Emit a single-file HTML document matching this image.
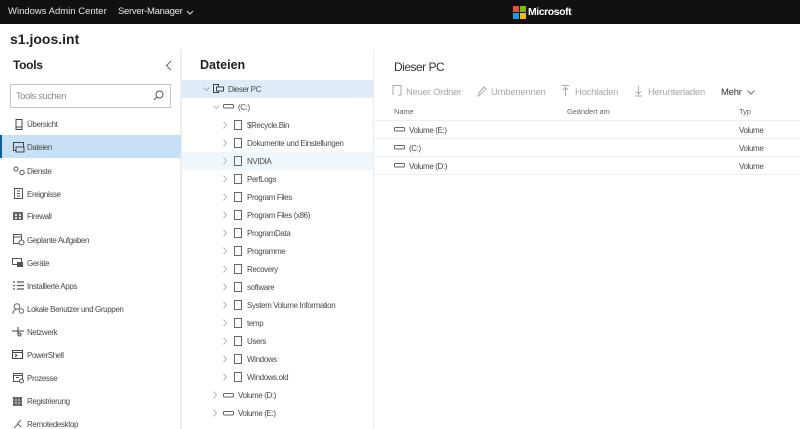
<!DOCTYPE html>
<html><head><meta charset="utf-8"><style>
html,body{margin:0;padding:0;background:#fff}
#p{position:relative;width:800px;height:429px;overflow:hidden;background:#fff;font-family:"Liberation Sans",sans-serif;color:#333;font-size:8px;filter:blur(.3px)}
.a{position:absolute;white-space:nowrap}
.t{position:absolute;white-space:nowrap;line-height:12px;height:12px;color:#4a4a4a;font-size:8px;letter-spacing:-.38px;transform:translateY(1px)}
.b{position:absolute;white-space:nowrap;top:86px;color:#a6a6a6;font-size:9.5px;line-height:13px;letter-spacing:-.25px}
svg{position:absolute;overflow:visible;fill:none}
</style></head><body><div id="p">
<div class="a" style="left:0;top:0;width:800px;height:24px;background:#111"></div>
<div class="a" style="left:8px;top:5px;color:#e6e6e6;font-size:9.5px;line-height:14px">Windows Admin Center</div>
<div class="a" style="left:118px;top:5px;color:#e6e6e6;font-size:9.5px;line-height:14px;letter-spacing:-.3px">Server-Manager</div>
<svg style="left:186px;top:10px" width="8" height="5"><path d="M1 1l3 3 3-3" stroke="#ddd"/></svg>
<svg style="left:513px;top:6px" width="13" height="13"><rect width="6" height="6" fill="#f25022"/><rect x="7" width="6" height="6" fill="#7fba00"/><rect y="7" width="6" height="6" fill="#00a4ef"/><rect x="7" y="7" width="6" height="6" fill="#ffb900"/></svg>
<div class="a" style="left:528px;top:5px;color:#fff;font-size:10.5px;font-weight:bold;line-height:15px;letter-spacing:-.45px">Microsoft</div>
<div class="a" style="left:10px;top:29px;color:#222;font-size:14px;font-weight:bold;line-height:20px">s1.joos.int</div>

<div class="a" style="left:180px;top:50px;width:2px;height:379px;background:#eee"></div>
<div class="a" style="left:373px;top:50px;width:1px;height:379px;background:#eee"></div>
<div class="a" style="left:13px;top:57px;color:#222;font-size:12px;font-weight:bold;line-height:17px;letter-spacing:-.3px">Tools</div>
<svg style="left:165px;top:60px" width="7" height="11"><path d="M6 1L1.500 5.500 6 10" stroke="#666"/></svg>
<div class="a" style="left:10px;top:84px;width:159px;height:22px;border:1px solid #c4c4c4;box-sizing:content-box"></div>
<div class="a" style="left:16px;top:90px;color:#8a8a8a;font-size:9.5px;line-height:14px;letter-spacing:-.45px">Tools suchen</div>
<svg style="left:153px;top:90px" width="11" height="11"><circle cx="6.500" cy="4.500" r="3.500" stroke="#555"/><path d="M4 7L1 10" stroke="#555"/></svg>

<div class="a" style="left:0;top:135px;width:181px;height:23px;background:#c7e0f4"></div>
<div class="a" style="left:0;top:135px;width:2px;height:23px;background:#0a5f9e"></div>

<svg style="left:14px;top:119px" width="10" height="11"><rect x="2" y=".5" width="6" height="10" stroke="#444"/><path d="M2 8h6" stroke="#444"/></svg>
<svg style="left:13px;top:142px" width="12" height="11"><rect x=".5" y=".5" width="10" height="8" stroke="#444"/><rect x="3" y="5" width="8" height="5" fill="#c7e0f4" stroke="#444"/></svg>
<svg style="left:13px;top:166px" width="12" height="10"><circle cx="3" cy="3" r="2" stroke="#555"/><circle cx="9" cy="6.500" r="2.200" stroke="#555"/></svg>
<svg style="left:14px;top:188px" width="10" height="12"><rect x=".5" y=".5" width="8" height="10" stroke="#555"/><path d="M3 3h3M3 5.500h3M3 8h3" stroke="#555"/></svg>
<svg style="left:13px;top:212px" width="11" height="9"><rect width="10" height="8" fill="#666"/><path d="M2 2h2v2H2zM6 2h2v2H6zM2 5h2v2H2zM6 5h2v2H6z" fill="#ddd"/></svg>
<svg style="left:13px;top:234px" width="12" height="12"><rect x=".5" y=".5" width="8" height="9" stroke="#555"/><path d="M.5 3h8" stroke="#555"/><circle cx="8.500" cy="8.500" r="2.500" fill="#fff" stroke="#555"/></svg>
<svg style="left:12px;top:258px" width="12" height="10"><rect x=".5" y=".5" width="9" height="6" stroke="#555"/><rect x="5" y="4" width="6" height="5" fill="#555"/></svg>
<svg style="left:13px;top:281px" width="11" height="10"><path d="M0 1h2M0 4.500h2M0 8h2M4 1h7M4 4.500h7M4 8h7" stroke="#555" stroke-width="1.200"/></svg>
<svg style="left:12px;top:303px" width="13" height="12"><circle cx="5" cy="3.500" r="2.800" stroke="#666"/><path d="M1 11c0-3 2-5 4-5" stroke="#666"/><circle cx="9.500" cy="8" r="2.200" stroke="#666"/></svg>
<svg style="left:12px;top:327px" width="13" height="10"><path d="M0 4h12M6 0v7" stroke="#444"/><circle cx="7.500" cy="7.500" r="1.500" fill="#fff" stroke="#444"/></svg>
<svg style="left:12px;top:350px" width="12" height="10"><rect x=".5" y=".5" width="10" height="8" stroke="#444"/><path d="M.5 2.500h10M3 4l2 1.500L3 7" stroke="#444"/></svg>
<svg style="left:13px;top:373px" width="12" height="11"><rect x=".5" y=".5" width="9" height="8" stroke="#555"/><path d="M.5 2.500h9M3 4.500h3" stroke="#555"/><circle cx="8.500" cy="8" r="2" fill="#fff" stroke="#555"/></svg>
<svg style="left:13px;top:396px" width="11" height="11"><rect y="1" width="9" height="9" fill="#555"/><path d="M3 1v9M6 1v9M0 4h9M0 7h9" stroke="#ddd" stroke-width=".6"/></svg>
<svg style="left:13px;top:419px" width="11" height="11"><path d="M1 9l4-4M8 1L4.500 4.500 8 8" stroke="#666"/></svg>

<div class="t" style="left:27px;top:118px">Übersicht</div>
<div class="t" style="left:27px;top:141px">Dateien</div>
<div class="t" style="left:27px;top:165px">Dienste</div>
<div class="t" style="left:27px;top:188px">Ereignisse</div>
<div class="t" style="left:27px;top:210px">Firewall</div>
<div class="t" style="left:27px;top:234px">Geplante Aufgaben</div>
<div class="t" style="left:27px;top:257px">Geräte</div>
<div class="t" style="left:27px;top:280px">Installierte Apps</div>
<div class="t" style="left:27px;top:303px">Lokale Benutzer und Gruppen</div>
<div class="t" style="left:27px;top:326px">Netzwerk</div>
<div class="t" style="left:27px;top:349px">PowerShell</div>
<div class="t" style="left:27px;top:372px">Prozesse</div>
<div class="t" style="left:27px;top:395px">Registrierung</div>
<div class="t" style="left:27px;top:418px">Remotedesktop</div>

<div class="a" style="left:200px;top:57px;color:#222;font-size:12.500px;font-weight:bold;line-height:17px">Dateien</div>
<div class="a" style="left:182px;top:80px;width:191px;height:18px;background:#deecf9"></div>
<div class="a" style="left:182px;top:152px;width:191px;height:18px;background:#eff6fc"></div>
<svg style="left:203px;top:87px" width="7" height="5"><path d="M.5.500L3.500 3.500 6.500.500" stroke="#aaa"/></svg>
<svg style="left:213px;top:84px" width="12" height="10"><rect x=".5" y=".5" width="5" height="8" stroke="#444"/><rect x="3.500" y="3" width="7" height="4" fill="#deecf9" stroke="#444"/></svg>
<div class="t" style="left:228px;top:83px">Dieser PC</div>
<svg style="left:213px;top:105px" width="7" height="5"><path d="M.5.500L3.500 3.500 6.500.500" stroke="#bbb"/></svg>
<svg style="left:223px;top:104px" width="11" height="5"><rect x=".5" y=".5" width="10" height="3.500" rx="1" stroke="#666"/></svg>
<div class="t" style="left:238px;top:101px">(C:)</div>

<svg style="left:223px;top:121px" width="5" height="8"><path d="M.5.500L3.500 4 .5 7.500" stroke="#bbb"/></svg><svg style="left:234px;top:120px" width="9" height="11"><path d="M.5.500h7v9h-7z" stroke="#666"/></svg><div class="t" style="left:247px;top:119px">$Recycle.Bin</div>
<svg style="left:223px;top:139px" width="5" height="8"><path d="M.5.500L3.500 4 .5 7.500" stroke="#bbb"/></svg><svg style="left:234px;top:138px" width="9" height="11"><path d="M.5.500h7v9h-7z" stroke="#666"/></svg><div class="t" style="left:247px;top:137px">Dokumente und Einstellungen</div>
<svg style="left:223px;top:157px" width="5" height="8"><path d="M.5.500L3.500 4 .5 7.500" stroke="#bbb"/></svg><svg style="left:234px;top:156px" width="9" height="11"><path d="M.5.500h7v9h-7z" stroke="#666"/></svg><div class="t" style="left:247px;top:155px">NVIDIA</div>
<svg style="left:223px;top:175px" width="5" height="8"><path d="M.5.500L3.500 4 .5 7.500" stroke="#bbb"/></svg><svg style="left:234px;top:174px" width="9" height="11"><path d="M.5.500h7v9h-7z" stroke="#666"/></svg><div class="t" style="left:247px;top:173px">PerfLogs</div>
<svg style="left:223px;top:193px" width="5" height="8"><path d="M.5.500L3.500 4 .5 7.500" stroke="#bbb"/></svg><svg style="left:234px;top:192px" width="9" height="11"><path d="M.5.500h7v9h-7z" stroke="#666"/></svg><div class="t" style="left:247px;top:191px">Program Files</div>
<svg style="left:223px;top:211px" width="5" height="8"><path d="M.5.500L3.500 4 .5 7.500" stroke="#bbb"/></svg><svg style="left:234px;top:210px" width="9" height="11"><path d="M.5.500h7v9h-7z" stroke="#666"/></svg><div class="t" style="left:247px;top:209px">Program Files (x86)</div>
<svg style="left:223px;top:229px" width="5" height="8"><path d="M.5.500L3.500 4 .5 7.500" stroke="#bbb"/></svg><svg style="left:234px;top:228px" width="9" height="11"><path d="M.5.500h7v9h-7z" stroke="#666"/></svg><div class="t" style="left:247px;top:227px">ProgramData</div>
<svg style="left:223px;top:247px" width="5" height="8"><path d="M.5.500L3.500 4 .5 7.500" stroke="#bbb"/></svg><svg style="left:234px;top:246px" width="9" height="11"><path d="M.5.500h7v9h-7z" stroke="#666"/></svg><div class="t" style="left:247px;top:245px">Programme</div>
<svg style="left:223px;top:265px" width="5" height="8"><path d="M.5.500L3.500 4 .5 7.500" stroke="#bbb"/></svg><svg style="left:234px;top:264px" width="9" height="11"><path d="M.5.500h7v9h-7z" stroke="#666"/></svg><div class="t" style="left:247px;top:263px">Recovery</div>
<svg style="left:223px;top:283px" width="5" height="8"><path d="M.5.500L3.500 4 .5 7.500" stroke="#bbb"/></svg><svg style="left:234px;top:282px" width="9" height="11"><path d="M.5.500h7v9h-7z" stroke="#666"/></svg><div class="t" style="left:247px;top:281px">software</div>
<svg style="left:223px;top:301px" width="5" height="8"><path d="M.5.500L3.500 4 .5 7.500" stroke="#bbb"/></svg><svg style="left:234px;top:300px" width="9" height="11"><path d="M.5.500h7v9h-7z" stroke="#666"/></svg><div class="t" style="left:247px;top:299px">System Volume Information</div>
<svg style="left:223px;top:319px" width="5" height="8"><path d="M.5.500L3.500 4 .5 7.500" stroke="#bbb"/></svg><svg style="left:234px;top:318px" width="9" height="11"><path d="M.5.500h7v9h-7z" stroke="#666"/></svg><div class="t" style="left:247px;top:317px">temp</div>
<svg style="left:223px;top:337px" width="5" height="8"><path d="M.5.500L3.500 4 .5 7.500" stroke="#bbb"/></svg><svg style="left:234px;top:336px" width="9" height="11"><path d="M.5.500h7v9h-7z" stroke="#666"/></svg><div class="t" style="left:247px;top:335px">Users</div>
<svg style="left:223px;top:355px" width="5" height="8"><path d="M.5.500L3.500 4 .5 7.500" stroke="#bbb"/></svg><svg style="left:234px;top:354px" width="9" height="11"><path d="M.5.500h7v9h-7z" stroke="#666"/></svg><div class="t" style="left:247px;top:353px">Windows</div>
<svg style="left:223px;top:373px" width="5" height="8"><path d="M.5.500L3.500 4 .5 7.500" stroke="#bbb"/></svg><svg style="left:234px;top:372px" width="9" height="11"><path d="M.5.500h7v9h-7z" stroke="#666"/></svg><div class="t" style="left:247px;top:371px">Windows.old</div>

<svg style="left:213px;top:391px" width="5" height="8"><path d="M.5.500L3.500 4 .5 7.500" stroke="#bbb"/></svg><svg style="left:223px;top:393px" width="11" height="5"><rect x=".5" y=".5" width="10" height="3.500" rx="1" stroke="#666"/></svg><div class="t" style="left:238px;top:389px">Volume (D:)</div>
<svg style="left:213px;top:409px" width="5" height="8"><path d="M.5.500L3.500 4 .5 7.500" stroke="#bbb"/></svg><svg style="left:223px;top:411px" width="11" height="5"><rect x=".5" y=".5" width="10" height="3.500" rx="1" stroke="#666"/></svg><div class="t" style="left:238px;top:407px">Volume (E:)</div>

<div class="a" style="left:394px;top:59px;color:#333;font-size:12px;line-height:17px;letter-spacing:-.5px">Dieser PC</div>

<svg style="left:392px;top:85px" width="10" height="13"><path d="M1 10V.5h8v9.500H6" stroke="#aaa"/></svg>
<div class="b" style="left:406px">Neuer Ordner</div>
<svg style="left:477px;top:86px" width="10" height="11"><path d="M1 10l1-3 5-6 2 2-6 6z" stroke="#aaa"/></svg>
<div class="b" style="left:491px">Umbenennen</div>
<svg style="left:561px;top:85px" width="9" height="12"><path d="M1 .5h7M4.500 11V3M2 5l2.500-2.500L7 5" stroke="#aaa"/></svg>
<div class="b" style="left:575px">Hochladen</div>
<svg style="left:634px;top:85px" width="9" height="12"><path d="M1 11h7M4.500 1v8M2 6.500L4.500 9 7 6.500" stroke="#aaa"/></svg>
<div class="b" style="left:648px">Herunterladen</div>
<div class="b" style="left:721px;color:#333">Mehr</div>
<svg style="left:747px;top:90px" width="8" height="5"><path d="M.5.500L4 4 7.500.500" stroke="#777"/></svg>

<div class="t" style="left:394px;top:105px;color:#666;font-size:7.5px;letter-spacing:-.1px">Name</div>
<div class="t" style="left:567px;top:105px;color:#666;font-size:7.5px;letter-spacing:-.1px">Geändert am</div>
<div class="t" style="left:739px;top:105px;color:#666;font-size:7.5px;letter-spacing:-.1px">Typ</div>
<div class="a" style="left:374px;top:120px;width:426px;height:1px;background:#eee"></div>
<div class="a" style="left:374px;top:138px;width:426px;height:1px;background:#eee"></div>
<div class="a" style="left:374px;top:156px;width:426px;height:1px;background:#eee"></div>
<div class="a" style="left:374px;top:174px;width:426px;height:1px;background:#eee"></div>

<svg style="left:394px;top:127px" width="11" height="5"><rect x=".5" y=".5" width="10" height="3.500" rx="1" stroke="#666"/></svg><div class="t" style="left:409px;top:124px">Volume (E:)</div><div class="t" style="left:739px;top:124px">Volume</div>
<svg style="left:394px;top:145px" width="11" height="5"><rect x=".5" y=".5" width="10" height="3.500" rx="1" stroke="#666"/></svg><div class="t" style="left:409px;top:142px">(C:)</div><div class="t" style="left:739px;top:142px">Volume</div>
<svg style="left:394px;top:163px" width="11" height="5"><rect x=".5" y=".5" width="10" height="3.500" rx="1" stroke="#666"/></svg><div class="t" style="left:409px;top:160px">Volume (D:)</div><div class="t" style="left:739px;top:160px">Volume</div>
</div></body></html>
